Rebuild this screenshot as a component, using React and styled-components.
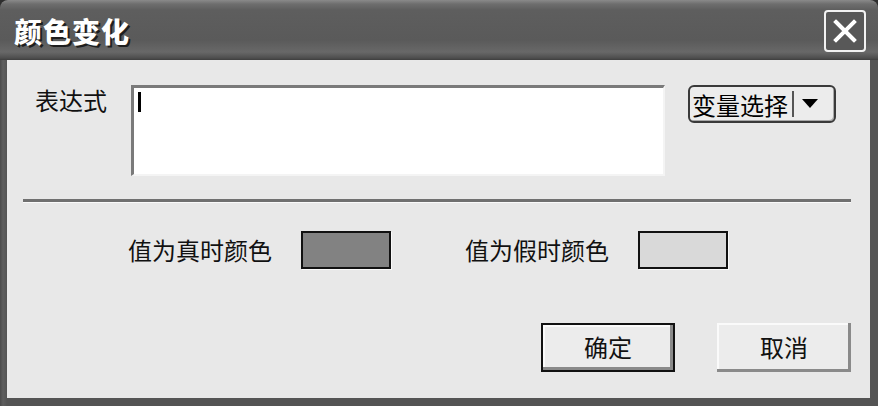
import styled, { createGlobalStyle } from "styled-components";

const GlobalStyle = createGlobalStyle`
  html, body {
    margin: 0;
    padding: 0;
    background: #2e2e2e;
  }
  body {
    font-family: "Noto Sans CJK SC", "Noto Sans", sans-serif;
  }
`;

const StyledWindow = styled.div`
  width: 878px;
  height: 406px;
  display: flex;
  flex-direction: column;
  background: linear-gradient(to right, #4a4a4a, #5e5e5e 3px, #545454 7px);
  box-sizing: border-box;
  padding: 0 8px 8px 7px;
  border-radius: 8px 8px 0 0;
  overflow: hidden;
`;

const StyledTitleBar = styled.div`
  height: 60px;
  margin: 0 -8px 0 -7px;
  padding: 0 12px 0 14px;
  display: flex;
  align-items: center;
  justify-content: space-between;
  background: linear-gradient(
    to bottom,
    #8a8a8a 0px,
    #6e6e6e 4px,
    #5e5e5e 10px,
    #5a5a5a 40px,
    #686868 52px,
    #4e4e4e 58px,
    #3e3e3e 60px
  );
  border-radius: 8px 8px 0 0;
`;

const StyledTitle = styled.h1`
  margin: 2px 0 0;
  font-size: 28px;
  font-weight: 900;
  color: #ffffff;
  letter-spacing: 1px;
  text-shadow: 2px 2px 0 #1e1e1e;
`;

const StyledClose = styled.button`
  width: 42px;
  height: 42px;
  margin-top: 2px;
  padding: 0;
  display: flex;
  align-items: center;
  justify-content: center;
  background: #585858;
  border: 2px solid #f2f2f2;
  border-radius: 4px;
`;

const StyledBody = styled.div`
  flex: 1;
  background: #e8e8e8;
  display: flex;
  flex-direction: column;
  padding: 25px 19px 0 16px;
`;

const StyledExprRow = styled.div`
  display: flex;
  align-items: flex-start;
`;

const StyledLabel = styled.span`
  font-size: 24px;
  line-height: 30px;
  color: #111;
  white-space: nowrap;
`;

const StyledExprLabel = styled(StyledLabel)`
  width: 96px;
  margin-left: 12px;
`;

const StyledTextBox = styled.div`
  width: 534px;
  height: 91px;
  box-sizing: border-box;
  background: #ffffff;
  border-top: 3px solid #7a7a7a;
  border-left: 3px solid #7a7a7a;
  border-right: 2px solid #f4f4f4;
  border-bottom: 2px solid #f4f4f4;
  padding: 4px 0 0 4px;
`;

const StyledCaret = styled.div`
  width: 3px;
  height: 20px;
  background: #000;
`;

const StyledSelect = styled.button`
  margin-left: 23px;
  width: 148px;
  height: 38px;
  display: flex;
  align-items: center;
  padding: 0 6px 0 2px;
  background: #ececec;
  border: 2px solid #3a3a3a;
  border-radius: 6px;
  box-shadow: inset -1px -1px 0 #a8a8a8;
  font-family: inherit;
  font-size: 24px;
  color: #000;
  box-sizing: border-box;
`;

const StyledSelectDivider = styled.span`
  width: 2px;
  height: 26px;
  background: #555;
  margin: 0 8px 0 4px;
`;

const StyledDivider = styled.div`
  height: 3px;
  margin-top: 23px;
  background: #707070;
  border-bottom: 1px solid #fafafa;
`;

const StyledColorRow = styled.div`
  display: flex;
  align-items: center;
  margin-top: 28px;
  padding-left: 105px;
`;

const StyledColorGroup = styled.div`
  display: flex;
  align-items: center;
  margin-right: ${(props) => props.$gap || 0}px;
`;

const StyledSwatch = styled.div`
  width: 90px;
  height: 38px;
  box-sizing: border-box;
  margin-left: 29px;
  background: ${(props) => props.$color};
  border: 2px solid #111;
  box-shadow: 1px 1px 0 #fafafa;
`;

const StyledActions = styled.div`
  display: flex;
  justify-content: flex-end;
  gap: 42px;
  margin-top: 54px;
`;

const StyledButton = styled.button`
  width: 134px;
  height: 49px;
  box-sizing: border-box;
  font-family: inherit;
  font-size: 24px;
  color: #111;
  background: #ececec;
  border: ${(props) => (props.$default ? "2px solid #111" : "none")};
  box-shadow: inset -3px -3px 0 #8a8a8a, inset 2px 2px 0 #fafafa;
  padding: 0 0 3px;
`;

export default function App() {
  return (
    <>
      <GlobalStyle />
      <StyledWindow>
        <StyledTitleBar>
          <StyledTitle>颜色变化</StyledTitle>
          <StyledClose aria-label="close">
            <svg width="26" height="26" viewBox="0 0 26 26">
              <path
                d="M4 4 L22 22 M22 4 L4 22"
                stroke="#ffffff"
                strokeWidth="4"
                strokeLinecap="square"
              />
            </svg>
          </StyledClose>
        </StyledTitleBar>
        <StyledBody>
          <StyledExprRow>
            <StyledExprLabel>表达式</StyledExprLabel>
            <StyledTextBox>
              <StyledCaret />
            </StyledTextBox>
            <StyledSelect>
              变量选择
              <StyledSelectDivider />
              <svg width="16" height="10" viewBox="0 0 16 10">
                <path d="M0 0 H16 L8 9 Z" fill="#000" />
              </svg>
            </StyledSelect>
          </StyledExprRow>
          <StyledDivider />
          <StyledColorRow>
            <StyledColorGroup $gap={74}>
              <StyledLabel>值为真时颜色</StyledLabel>
              <StyledSwatch $color="#828282" />
            </StyledColorGroup>
            <StyledColorGroup>
              <StyledLabel>值为假时颜色</StyledLabel>
              <StyledSwatch $color="#d9d9d9" />
            </StyledColorGroup>
          </StyledColorRow>
          <StyledActions>
            <StyledButton $default>确定</StyledButton>
            <StyledButton>取消</StyledButton>
          </StyledActions>
        </StyledBody>
      </StyledWindow>
    </>
  );
}
